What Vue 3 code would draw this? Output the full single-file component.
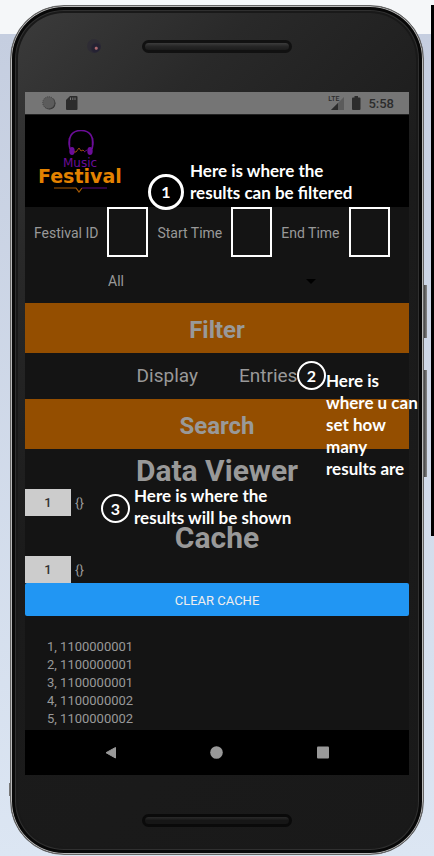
<script setup>
import { ref } from 'vue'

const fields = [
  { id: 'festival', label: 'Festival ID' },
  { id: 'start', label: 'Start Time' },
  { id: 'end', label: 'End Time' }
]
const values = ref({ festival: '', start: '', end: '' })
const stage = ref('All')
const entries = [
  '1, 1100000001',
  '2, 1100000001',
  '3, 1100000001',
  '4, 1100000002',
  '5, 1100000002'
]
</script>

<template>
  <div class="page">
    <div class="edge"></div>
    <div class="phone">
      <i class="side power"></i>
      <i class="side volume"></i>
      <i class="side nub"></i>
      <div class="bezel top">
        <i class="camera"></i>
        <i class="slot"></i>
      </div>

      <main class="screen">
        <div class="status">
          <svg class="dot" width="14" height="14" viewBox="0 0 14 14">
            <circle cx="7.5" cy="7.5" r="6" fill="#333" />
            <circle cx="6.7" cy="6.7" r="6" fill="#5c5c5c" stroke="#444" stroke-dasharray="1 1" />
          </svg>
          <svg class="card" width="12" height="14" viewBox="0 0 12 14">
            <path d="M4 0H10.5Q11.5 0 11.5 1V13Q11.5 14 10.5 14H1Q0 14 0 13V4Z" fill="#2c2c2c" />
            <path d="M4.5 1.5V4M6.8 1.5V4M9 1.5V4" stroke="#777" />
          </svg>
          <span class="lte">LTE</span>
          <svg class="signal" width="13" height="13" viewBox="0 0 13 13">
            <path d="M13 0V13H0Z" fill="#5b5b5b" />
            <path d="M7 6V13H0Z" fill="#2c2c2c" />
          </svg>
          <svg class="battery" width="9" height="14" viewBox="0 0 9 14">
            <path d="M2.5 0H6V1.5H7.5Q8.5 1.5 8.5 2.5V13Q8.5 14 7.5 14H1Q0 14 0 13V2.5Q0 1.5 1 1.5H2.5Z" fill="#2c2c2c" />
          </svg>
          <span class="clock">5:58</span>
        </div>

        <header class="header">
          <svg class="logo" width="90" height="66" viewBox="0 0 90 66">
            <path d="M32 19C29 7 34 0.5 43 0.5S57 7 54 19" fill="none" stroke="#6b0d98" stroke-width="1.6" />
            <path d="M31.5 8V15M54.5 8V15" stroke="#6b0d98" stroke-width="1.5" />
            <ellipse cx="34" cy="21" rx="2.7" ry="4" fill="#6b0d98" />
            <ellipse cx="52" cy="21" rx="2.7" ry="4" fill="#6b0d98" />
            <path d="M36 22H38L41 18L43 21L45 20L47 22" fill="none" stroke="#9a4c10" />
            <path d="M46 22L49 20" stroke="#5e0a86" />
            <text class="music" x="25" y="37">Music</text>
            <text class="festival" x="0" y="53">Festival</text>
            <path d="M16 58H38L41 62L44 58" fill="none" stroke="#a75a05" stroke-width="1.2" />
            <path d="M44 58H69" stroke="#4d096b" stroke-width="1.2" />
          </svg>
        </header>

        <form class="fields" @submit.prevent>
          <template v-for="f in fields" :key="f.id">
            <label :for="f.id">{{ f.label }}</label>
            <input :id="f.id" v-model="values[f.id]" type="text" />
          </template>
        </form>

        <div class="picker">
          <select v-model="stage" aria-label="Stage">
            <option>All</option>
          </select>
          <svg width="10" height="5" viewBox="0 0 10 5"><path d="M0 0H10L5 5Z" fill="#000" /></svg>
        </div>

        <button type="button" class="bar">Filter</button>
        <div class="display"><span>Display</span><span>Entries</span></div>
        <button type="button" class="bar">Search</button>

        <h1>Data Viewer</h1>
        <table class="data"><tbody><tr><th scope="row">1</th><td>{}</td></tr></tbody></table>
        <h1>Cache</h1>
        <table class="data"><tbody><tr><th scope="row">1</th><td>{}</td></tr></tbody></table>
        <button type="button" class="clear">CLEAR CACHE</button>

        <ul class="entries">
          <li v-for="e in entries" :key="e">{{ e }}</li>
        </ul>

        <nav class="nav">
          <button type="button" aria-label="Back">
            <svg width="14" height="14" viewBox="0 0 14 14"><path d="M11.500 1.500V12L2 6.700Z" fill="#999" stroke="#999" stroke-linejoin="round" /></svg>
          </button>
          <button type="button" aria-label="Home">
            <svg width="14" height="14" viewBox="0 0 14 14"><circle cx="6.500" cy="6.500" r="6.300" fill="#999" /></svg>
          </button>
          <button type="button" aria-label="Recent apps">
            <svg width="14" height="14" viewBox="0 0 14 14"><rect x="1" y="0.500" width="12" height="12" rx="1" fill="#999" /></svg>
          </button>
        </nav>

        <span class="badge large b1">1</span>
        <p class="note n1">Here is where the<br />results can be filtered</p>
        <span class="badge b2">2</span>
        <p class="note n2">Here is<br />where u can<br />set how<br />many<br />results are</p>
        <span class="badge b3">3</span>
        <p class="note n3">Here is where the<br />results will be shown</p>
      </main>

      <div class="bezel bottom"><i class="slot"></i></div>
    </div>
  </div>
</template>

<style>
body {
  margin: 0;
}
</style>

<style scoped>
* {
  box-sizing: border-box;
}
.page {
  position: relative;
  min-height: 100vh;
  padding: 5px 10px 1px;
  background: linear-gradient(#f5f7f9 0 34px, #c5cee0 34px, #dce6f3 100%);
  font-family: Roboto, "Liberation Sans", sans-serif;
  color: #999;
}
.edge {
  position: absolute;
  top: 5px;
  right: 0;
  width: 3px;
  height: 531px;
  background: #000;
}
.phone {
  position: relative;
  padding: 0 14px;
  border: 1px solid #666;
  border-radius: 54px;
  background: linear-gradient(135deg, #3c3c3c 0, #292929 20%, #1b1b1b 45%, #191919 100%);
  box-shadow: inset 0 0 0 1px #b8b8b8, inset 0 0 0 4px #080808, inset 0 0 0 5px #303030, inset 0 0 0 7px #191919;
}
.side {
  position: absolute;
  right: -4px;
  width: 3px;
  background: linear-gradient(90deg, #444, #888);
}
.power {
  top: 279px;
  height: 53px;
}
.volume {
  top: 364px;
  height: 107px;
}
.nub {
  top: 777px;
  right: auto;
  left: -2px;
  width: 1px;
  height: 13px;
  background: #777;
}
.bezel {
  position: relative;
  display: flex;
  justify-content: center;
}
.top {
  height: 86px;
  padding-top: 34px;
}
.bottom {
  height: 79px;
  padding-top: 39px;
}
.slot {
  width: 150px;
  height: 13px;
  border: 3px solid #111;
  border-radius: 7px;
  background: linear-gradient(#3c3c3c, #262626 50%, #1c1c1c);
}
.bottom .slot {
  border-color: #0a0a0a;
  background: linear-gradient(#2a2a2a, #161616 50%);
}
.camera {
  position: absolute;
  top: 33px;
  left: 62px;
  width: 14px;
  height: 14px;
  border-radius: 50%;
  background: radial-gradient(circle at 66% 66%, #b06a70 0 1px, #252233 2px 4px, #2e2c34 6px);
}
.screen {
  position: relative;
  background: #141414;
}
.status {
  display: flex;
  align-items: center;
  height: 22px;
  padding: 0 15px 0 17px;
  background: #757575;
  color: #2c2c2c;
}
.card {
  margin-left: 10px;
}
.lte {
  align-self: flex-start;
  margin-left: auto;
  font-size: 7px;
  line-height: 14px;
  font-weight: 500;
}
.signal {
  margin-left: -8px;
}
.battery {
  margin: 0 7px 0 8px;
}
.clock {
  font-size: 13px;
  font-weight: 500;
}
.header {
  height: 93px;
  padding: 15px 13px 0;
  border-top: 1px solid #222;
  background: #000;
}
.logo {
  display: block;
}
.logo text {
  font-family: "DejaVu Sans", sans-serif;
}
.music {
  font-size: 12px;
  fill: #6b0d98;
}
.festival {
  font-size: 19px;
  font-weight: 700;
  fill: #e38200;
}
.fields {
  display: flex;
  align-items: center;
  gap: 9px;
  height: 50px;
  padding-left: 9px;
  font-size: 14px;
  white-space: nowrap;
}
.fields label {
  padding-top: 2px;
}
.fields input {
  width: 41px;
  height: 50px;
  margin: 0;
  padding: 4px;
  border: 2px solid #fff;
  border-radius: 0;
  background: transparent;
  color: #999;
  font: inherit;
}
.picker {
  display: flex;
  align-items: center;
  height: 46px;
  padding-top: 2px;
  margin-left: 83px;
}
.picker select {
  width: 208px;
  margin-right: -10px;
  padding: 0;
  border: 0;
  appearance: none;
  background: transparent;
  color: #999;
  font: 14px Roboto, sans-serif;
}
.bar {
  display: block;
  width: 100%;
  height: 50px;
  padding: 4px 0 0;
  border: 0;
  background: #944e00;
  color: #999;
  font: 700 24px Roboto, sans-serif;
}
.display {
  display: flex;
  justify-content: center;
  gap: 41px;
  font-size: 19px;
  line-height: 46px;
}
h1 {
  margin: 0;
  padding-top: 4px;
  font-size: 30px;
  line-height: 36px;
  font-weight: 700;
  text-align: center;
}
.data {
  border-collapse: collapse;
  font-size: 13px;
}
.data th,
.data td {
  height: 27px;
  padding: 0;
}
.data th {
  width: 46px;
  background: #ccc;
  color: #333;
  font-weight: 500;
}
.data td {
  padding-left: 4px;
}
.clear {
  display: block;
  width: 100%;
  height: 33px;
  padding: 2px 0 0;
  border: 0;
  border-radius: 2px;
  background: #2196f3;
  color: #eee;
  font: 13px Roboto, sans-serif;
}
.entries {
  margin: 0;
  padding: 22px 22px 2px;
  list-style: none;
  font-size: 13px;
  line-height: 18px;
}
.nav {
  display: flex;
  justify-content: center;
  gap: 92px;
  height: 45px;
  background: #000;
}
.nav button {
  display: flex;
  align-items: center;
  padding: 0;
  border: 0;
  background: none;
}
.badge {
  position: absolute;
  display: flex;
  align-items: center;
  justify-content: center;
  width: 29px;
  height: 29px;
  border: 2px solid #fff;
  border-radius: 50%;
  color: #fff;
  font: 700 16px/22px Lato, sans-serif;
}
.large {
  width: 36px;
  height: 36px;
  border-width: 3px;
}
.note {
  position: absolute;
  margin: 0;
  color: #fff;
  font: 700 17px/22px Lato, sans-serif;
  white-space: nowrap;
}
.b1 {
  top: 82px;
  left: 123px;
}
.n1 {
  top: 68px;
  left: 165px;
}
.b2 {
  top: 269px;
  left: 272px;
}
.n2 {
  top: 278px;
  left: 301px;
}
.b3 {
  top: 402px;
  left: 76px;
}
.n3 {
  top: 393px;
  left: 109px;
}
</style>
